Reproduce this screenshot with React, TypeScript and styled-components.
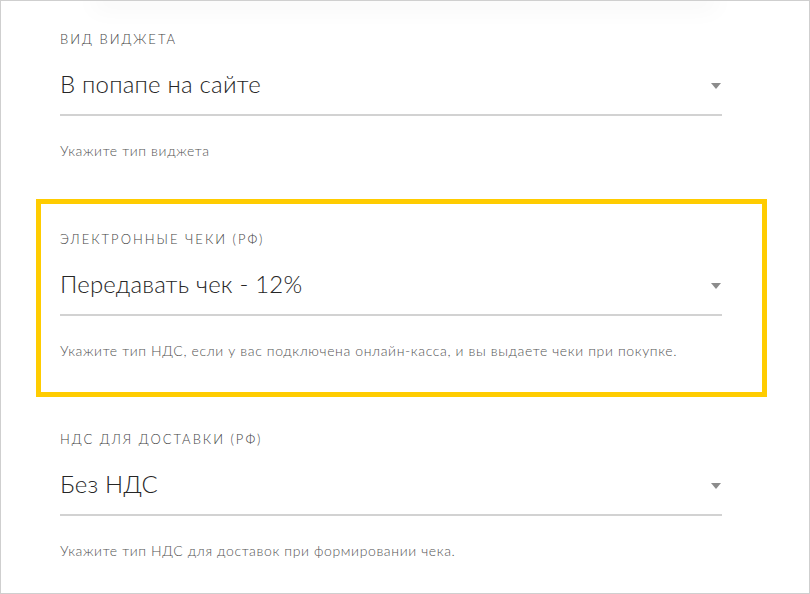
import React from "react";
import styled, { createGlobalStyle } from "styled-components";

const GlobalStyle = createGlobalStyle`
  html, body {
    margin: 0;
    padding: 0;
    background: #ffffff;
  }
  body {
    font-family: "Lato", "Open Sans", sans-serif;
  }
`;

const Frame = styled.div`
  width: 810px;
  height: 594px;
  box-sizing: border-box;
  border: 1px solid #cfcfcf;
  background: #fff;
  overflow: hidden;
  position: relative;
`;

// край карточки над видимой областью, от неё только тень
const CardEdge = styled.div`
  height: 0;
  margin: 0 100px;
  box-shadow: 0 0 24px 8px rgba(0, 0, 0, 0.04);
`;

const List = styled.div`
  display: flex;
  flex-direction: column;
  gap: 2px;
  margin-top: -2px;
  padding-left: 35px;
`;

const Section = styled.section<{ $active?: boolean }>`
  width: 731px;
  height: 198px;
  box-sizing: border-box;
  border: 5px solid ${(p) => (p.$active ? "#ffcc00" : "transparent")};
  padding: 27px 40px 0 19px;
`;

const Label = styled.div`
  font-size: 13px;
  line-height: 16px;
  font-weight: 300;
  letter-spacing: 2px;
  color: #444;
  text-transform: uppercase;
`;

const Field = styled.div`
  display: flex;
  align-items: center;
  justify-content: space-between;
  margin-top: 21px;
  padding-bottom: 14px;
  border-bottom: 2px solid #d2d2d2;
`;

const Value = styled.div`
  font-size: 24px;
  line-height: 32px;
  font-weight: 300;
  letter-spacing: 0.2px;
  color: #262626;
`;

const Caret = styled.span`
  width: 0;
  height: 0;
  margin: 4px 1px 0 0;
  border-left: 5px solid transparent;
  border-right: 5px solid transparent;
  border-top: 6px solid #8c8c8c;
`;

const Hint = styled.div`
  margin-top: 26px;
  font-size: 14px;
  line-height: 18px;
  font-weight: 300;
  letter-spacing: 0.62px;
  color: #555;
`;

const fields = [
  {
    label: "Вид виджета",
    value: "В попапе на сайте",
    hint: "Укажите тип виджета",
  },
  {
    label: "Электронные чеки (РФ)",
    value: "Передавать чек - 12%",
    hint: "Укажите тип НДС, если у вас подключена онлайн-касса, и вы выдаете чеки при покупке.",
    active: true,
  },
  {
    label: "НДС для доставки (РФ)",
    value: "Без НДС",
    hint: "Укажите тип НДС для доставок при формировании чека.",
  },
];

function App() {
  return (
    <>
      <GlobalStyle />
      <Frame>
        <CardEdge />
        <List>
          {fields.map((f) => (
            <Section key={f.label} $active={f.active}>
              <Label>{f.label}</Label>
              <Field>
                <Value>{f.value}</Value>
                <Caret />
              </Field>
              <Hint>{f.hint}</Hint>
            </Section>
          ))}
        </List>
      </Frame>
    </>
  );
}

export default App;
